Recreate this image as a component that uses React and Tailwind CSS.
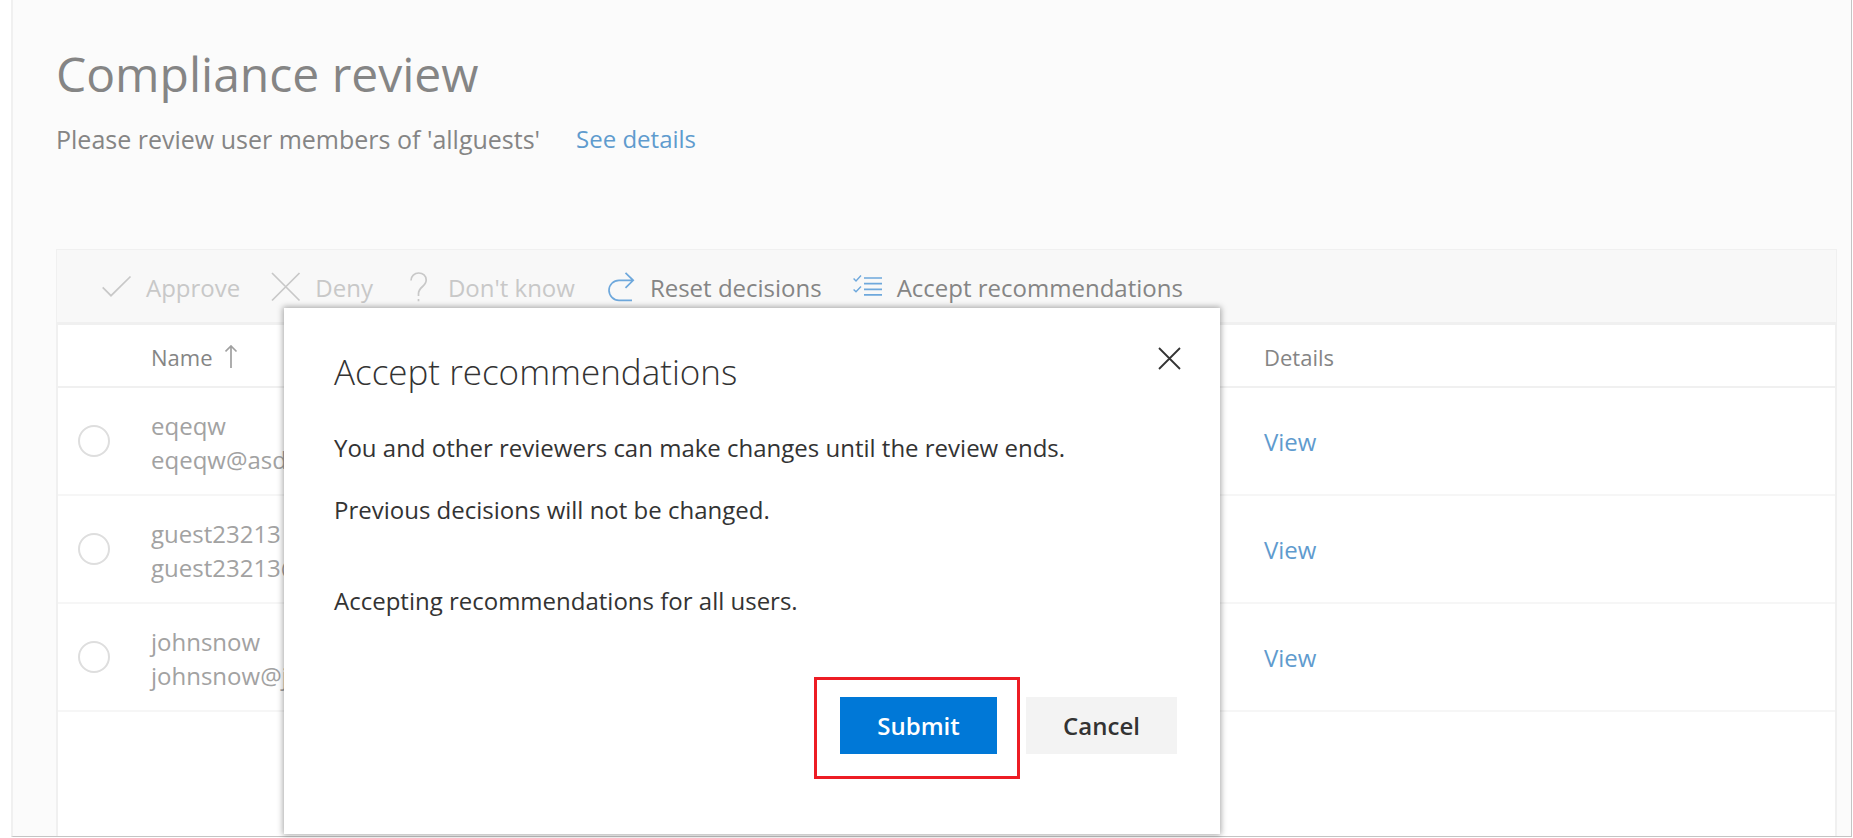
const people = [
  { id: 'eqeqw', mail: 'eqeqw@asdfgh.com' },
  { id: 'guest23213', mail: 'guest23213@outlook.com' },
  { id: 'johnsnow', mail: 'johnsnow@johnsnow.com' },
];

function CommandIcon({ className = '', children }) {
  return (
    <svg
      className={`h-8 w-[30px] shrink-0 ${className}`}
      viewBox="0 0 30 32"
      fill="none"
      stroke="currentColor"
      strokeWidth="1.7"
      aria-hidden="true"
    >
      {children}
    </svg>
  );
}

const icons = {
  check: (
    <CommandIcon>
      <path d="M.7 15.300 9 23.700 28.500 4.500" />
    </CommandIcon>
  ),
  cross: (
    <CommandIcon>
      <path d="M1 1 28.500 28.500M28.500 1 1 28.500" />
    </CommandIcon>
  ),
  question: (
    <CommandIcon>
      <path d="M7 8.500C7 4 10.500 1 14.700 1 19 1 22.200 3.800 22.200 8c0 6.500-7.700 7-7.700 13.500V24M14.500 27v2.200" />
    </CommandIcon>
  ),
  reset: (
    <CommandIcon className="text-[#6ea8dc]">
      <path d="M19.500.800 27.200 8.300 19.500 15.800M27 8.300H13a10 10 0 0 0 0 20H26" />
    </CommandIcon>
  ),
  checklist: (
    <CommandIcon className="text-[#6ea8dc]">
      <path d="M11 6H29M11 11.700H29M11 17.300H29M11 22.800H29" />
      <path strokeWidth="1.4" d="M.600 6.500 3 8.900 8 3.600M.600 17.400 3 19.800 8 14.500" />
    </CommandIcon>
  ),
};

function Command({ icon, children, disabled }) {
  return (
    <button
      type="button"
      disabled={disabled}
      className="flex items-center gap-3.5 whitespace-nowrap text-[#858585] disabled:text-[#c8c8c8]"
    >
      {icons[icon]}
      {children}
    </button>
  );
}

export default function App() {
  return (
    <div className="relative min-h-screen bg-white pr-px pb-px pl-[11px] font-['Open_Sans','Noto_Sans',sans-serif] text-[24px] leading-[34px]">
      <main className="flex min-h-[calc(100vh-1px)] flex-col border-r border-b border-l-2 border-r-[#c4c4c4] border-b-[#c4c4c4] border-l-[#f0f0f0] bg-[#fbfbfb] pr-3.5 pl-[43px]">
        <header className="pt-[42px] pb-[93px] text-[#858585]">
          <h1 className="text-[48px] leading-[64px]">Compliance review</h1>
          <p className="mt-4 flex gap-9 text-[25px]">
            Please review user members of 'allguests'
            <a href="#details" className="text-[24px] text-[#5f9bce]">See details</a>
          </p>
        </header>

        <section className="flex grow flex-col border border-b-0 border-[#f0f0f0] bg-white">
          <div className="flex h-[75px] items-center gap-[31px] border-b-3 border-[#f0f0f0] bg-[#f8f8f8] pt-1 pl-[45px]">
            <Command disabled icon="check">Approve</Command>
            <Command disabled icon="cross">Deny</Command>
            <Command disabled icon="question">Don't know</Command>
            <Command icon="reset">Reset decisions</Command>
            <Command icon="checklist">Accept recommendations</Command>
          </div>
          <div className="grow border-x border-[#f0f0f0]">
            <table className="w-full table-fixed border-collapse text-left">
              <colgroup>
                <col className="w-[93px]" />
                <col />
                <col className="w-[571px]" />
              </colgroup>
              <thead className="text-[22px] text-[#858585]">
                <tr className="h-[62px] border-b-2 border-[#f0f0f0]">
                  <td />
                  <th className="pt-0.5 font-normal" aria-sort="ascending">
                    <span className="flex items-center gap-3">
                      Name
                      <svg className="h-6 w-3.5" viewBox="0 0 14 24" fill="none" stroke="#a0a0a0" strokeWidth="1.700" aria-hidden="true">
                        <path d="M6 23V1M.500 6.500 6 1 11.500 6.500" />
                      </svg>
                    </span>
                  </th>
                  <th className="pt-0.5 font-normal">Details</th>
                </tr>
              </thead>
              <tbody>
                {people.map((p) => (
                  <tr key={p.id} className="h-[108px] border-b-2 border-[#f6f6f6]">
                    <td className="pl-5">
                      <input
                        type="radio"
                        name="user"
                        aria-label={p.id}
                        className="block h-8 w-8 appearance-none rounded-full border-2 border-[#dedede] bg-white"
                      />
                    </td>
                    <td className="pt-[3px] text-[#a2a2a2]">
                      <div>{p.id}</div>
                      <div>{p.mail}</div>
                    </td>
                    <td className="pt-0.5"><a href={`#${p.id}`} className="text-[#5f9bce]">View</a></td>
                  </tr>
                ))}
              </tbody>
            </table>
          </div>
        </section>
      </main>

      <div
        role="dialog"
        aria-labelledby="dialog-title"
        className="absolute top-[308px] left-[284px] flex h-[526px] w-[936px] flex-col bg-white pr-[43px] pl-[50px] text-[#333333] shadow-[0_0_6px_1px_rgba(0,0,0,0.35)]"
      >
        <div className="flex items-start justify-between pt-[38px]">
          <h2 id="dialog-title" className="text-[35px] leading-[52px] font-light">Accept recommendations</h2>
          <button type="button" aria-label="Close" className="-mr-1">
            <svg className="h-6 w-6" viewBox="0 0 24 24" fill="none" stroke="currentColor" strokeWidth="1.800" aria-hidden="true">
              <path d="M2 2 23 23M23 2 2 23" />
            </svg>
          </button>
        </div>
        <p className="mt-[33px]">You and other reviewers can make changes until the review ends.</p>
        <p className="mt-7">Previous decisions will not be changed.</p>
        <p className="mt-[57px]">Accepting recommendations for all users.</p>
        <div className="mt-auto mb-[55px] flex items-start justify-end gap-1.5 font-semibold">
          <div className="border-3 border-[#ed1c24] pt-[17px] pr-5 pb-[22px] pl-[23px]">
            <button type="button" className="block h-[57px] w-[157px] bg-[#0078d7] text-white">Submit</button>
          </div>
          <button type="button" className="mt-5 h-[57px] w-[151px] bg-[#f3f3f3]">Cancel</button>
        </div>
      </div>
    </div>
  );
}
